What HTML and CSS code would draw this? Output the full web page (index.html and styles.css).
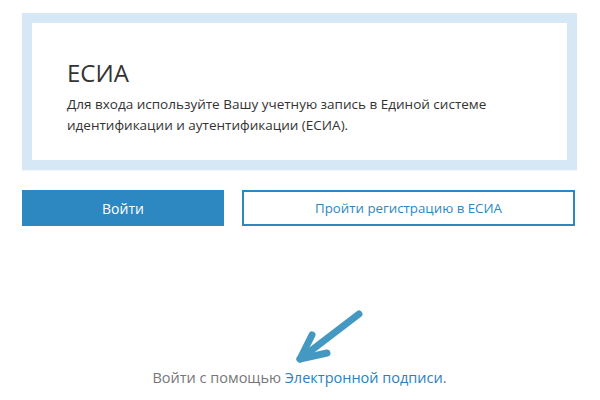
FILE: index.html
```html
<!DOCTYPE html>
<html lang="ru">
<head>
  <meta charset="UTF-8">
  <title>Вход через ЕСИА</title>
  <link rel="stylesheet" href="styles.css">
</head>
<body>
  <div class="page">
    <div class="esia-box">
      <div class="esia-inner">
        <h1>ЕСИА</h1>
        <p>Для входа используйте Вашу учетную запись в Единой системе идентификации и аутентификации (ЕСИА).</p>
      </div>
    </div>

    <div class="actions">
      <button type="button" class="btn btn-primary">Войти</button>
      <button type="button" class="btn btn-outline">Пройти регистрацию в ЕСИА</button>
    </div>

    <div class="signature">
      <div class="arrow">
        <svg width="70" height="54" viewBox="0 0 70 54">
          <g fill="none" stroke="#4499c2" stroke-width="7" stroke-linecap="round" stroke-linejoin="round">
            <path d="M64 4 L5 49"/>
            <path d="M17 25 L5 49 L32 43"/>
          </g>
        </svg>
      </div>
      <p class="signature-text">Войти с помощью <a href="#">Электронной подписи</a>.</p>
    </div>
  </div>
</body>
</html>
```

FILE: styles.css
```css
body {
  margin: 0;
  font-family: "Open Sans", "Noto Sans", sans-serif;
  background-color: #fff;
  color: #333;
}
.page {
  width: 555px;
  padding: 13px 0 0 22px;
}
.esia-box {
  border: 10px solid #d6e8f6;
  background-color: #fff;
  box-shadow: 0 1px 1px rgba(0,0,0,0.04);
}
.esia-inner {
  padding: 36px 30px 24px 35px;
}
.esia-inner h1 {
  margin: 0 0 7px;
  font-size: 24px;
  font-weight: normal;
  line-height: 28px;
  color: #333;
}
.esia-inner p {
  margin: 0;
  font-size: 13.5px;
  line-height: 21px;
}
.actions {
  display: flex;
  gap: 18px;
  width: 553px;
  margin-top: 20px;
}
.btn {
  height: 36px;
  box-sizing: border-box;
  font-family: inherit;
  font-size: 14px;
  cursor: pointer;
}
.btn-primary {
  width: 202px;
  border: none;
  background-color: #2d87c1;
  color: #fff;
}
.btn-outline {
  flex: 1;
  border: 2px solid #2d87c1;
  background-color: #fff;
  color: #2d87c1;
  font-size: 13.3px;
}
.signature {
  margin-top: 84px;
  text-align: center;
}
.arrow {
  height: 54px;
}
.arrow svg {
  margin-left: 60px;
}
.signature-text {
  margin: 4px 0 0;
  font-size: 14.5px;
  line-height: 20px;
  color: #777;
}
.signature-text a {
  color: #2a7fc0;
  text-decoration: none;
}
```
